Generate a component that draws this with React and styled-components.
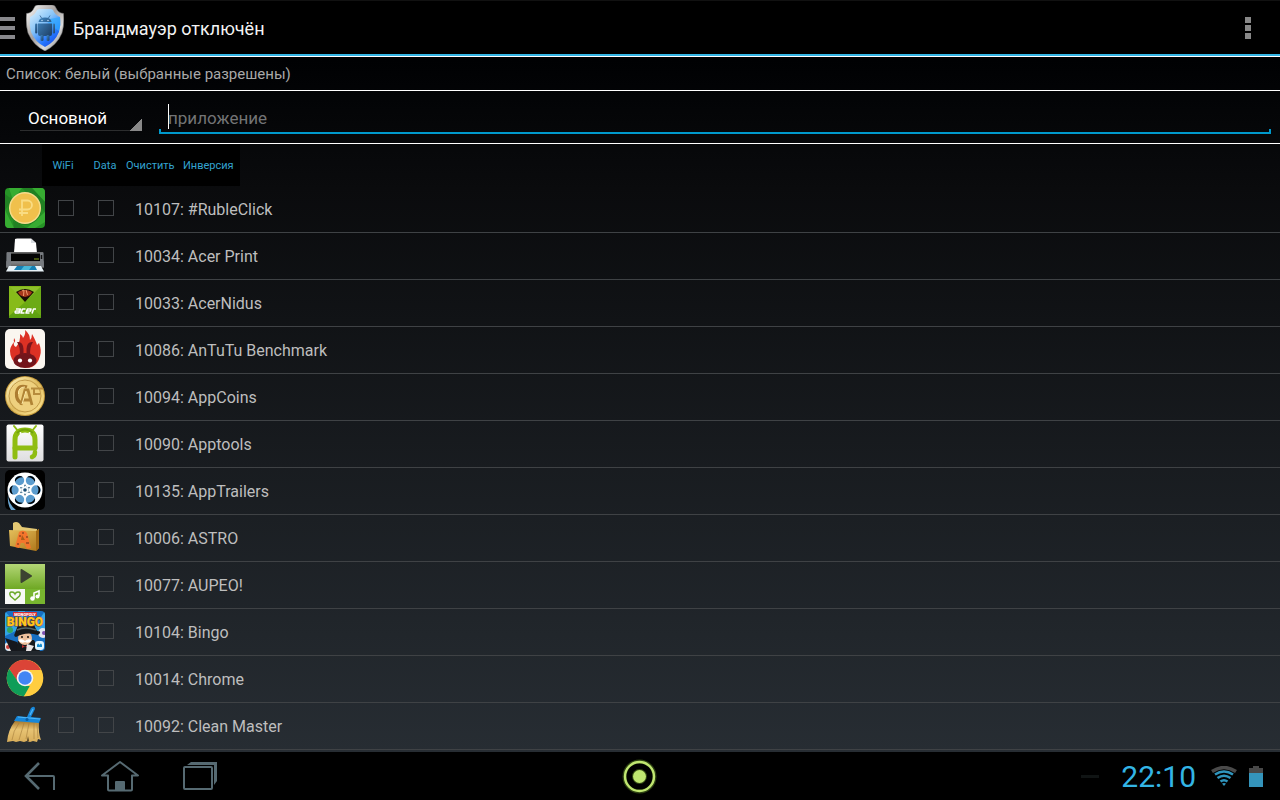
import React from "react";
import styled, { createGlobalStyle } from "styled-components";

const GlobalStyle = createGlobalStyle`
  *, *::before, *::after { box-sizing: border-box; }
  body { margin: 0; background: #000; }
  button, input, select { font: inherit; color: inherit; margin: 0; border: 0; padding: 0; background: none; border-radius: 0; }
  svg { display: block; }
`;

const Screen = styled.div`
  min-height: 100vh;
  display: flex;
  flex-direction: column;
  font-family: Roboto, "Noto Sans", sans-serif;
  font-size: 16px;
  color: #bebebe;
`;

const Content = styled.div`
  flex: 1;
  padding-bottom: 2px;
  background: linear-gradient(#000 0%, #000103 8%, #0a0b0d 25%, #272d33 100%);
`;

const ActionBar = styled.header`
  display: flex;
  align-items: center;
  height: 56px;
  padding-top: 1px;
  padding-right: 17px;
  background: #000;
  border-top: 1px solid #111;
  border-bottom: 2px solid #33b5e5;
`;

const DrawerButton = styled.button`
  display: flex;
  flex-direction: column;
  gap: 5px;
  width: 26px;
`;

const DrawerBar = styled.span`
  width: 15px;
  height: 4px;
  background: #88888c;
`;

const Title = styled.h1`
  flex: 1;
  margin: 0 0 0 9px;
  padding-top: 1px;
  font-size: 18px;
  line-height: 24px;
  font-weight: 400;
  color: #f3f3f3;
`;

const OverflowButton = styled.button`
  display: flex;
  flex-direction: column;
  align-items: center;
  gap: 2px;
  width: 30px;
`;

const Dot = styled.span`
  width: 6px;
  height: 6px;
  background: #888;
`;

const Mode = styled.p`
  margin: 0;
  height: 35px;
  padding: 1px 6px 0;
  line-height: 33px;
  font-size: 15px;
  color: #a9a9a9;
  border-top: 1px solid #fff;
  border-bottom: 1px solid #fff;
`;

const FilterBar = styled.div`
  display: flex;
  gap: 17px;
  height: 53px;
  padding: 10px 9px 9px 20px;
  border-bottom: 1px solid #fff;
`;

const ProfileSelect = styled.select`
  appearance: none;
  width: 122px;
  height: 30px;
  padding: 3px 8px 0;
  font-size: 17px;
  color: #fff;
  outline: none;
  background:
    linear-gradient(to bottom right, transparent 50%, #888 50%) right bottom / 12px 12px no-repeat,
    linear-gradient(#2c2d2e, #2c2d2e) left bottom / 100% 1px no-repeat;
`;

const SearchInput = styled.input`
  flex: 1;
  min-width: 0;
  height: 33px;
  padding: 0 9px;
  font-size: 17px;
  color: #fff;
  outline: none;
  background:
    linear-gradient(#fff, #fff) 9px 3px / 1px 25px no-repeat,
    linear-gradient(#0099cc, #0099cc) left bottom / 100% 2px no-repeat,
    linear-gradient(#0099cc, #0099cc) left bottom / 2px 5px no-repeat,
    linear-gradient(#0099cc, #0099cc) right bottom / 2px 5px no-repeat;
  &::placeholder { color: #737475; opacity: 1; }
`;

const BulkActions = styled.div`
  display: grid;
  grid-template-columns: 42px 42px 57px 57px;
  width: 198px;
  height: 42px;
  margin-left: 42px;
  background: #000;
`;

const BulkButton = styled.button`
  padding-top: 2px;
  font-size: 11px;
  line-height: 16px;
  color: #33a3d0;
  white-space: nowrap;
  text-align: ${(p) => (p.$start ? "left" : "center")};
`;

const AppList = styled.ul`
  list-style: none;
  margin: 0;
  padding: 0;
`;

const AppRow = styled.li`
  display: flex;
  align-items: center;
  height: 47px;
  padding: 0 5px;
  border-bottom: 1px solid #3f4245;
`;

const AppIcon = styled.svg`
  flex: none;
  width: 40px;
  height: 40px;
  margin-right: 13px;
  margin-bottom: 2px;
`;

const Check = styled.input`
  appearance: none;
  flex: none;
  width: 16px;
  height: 16px;
  margin: 0 24px 2px 0;
  && { border: 1px solid #424548; }
  &:checked { background: #33b5e5; }
`;

const AppName = styled.span`
  margin-left: -3px;
  padding-top: 2px;
  line-height: 20px;
`;

const NavBar = styled.nav`
  display: grid;
  grid-template-columns: 1fr auto 1fr;
  align-items: center;
  height: 48px;
  background: #000;
`;

const NavKeys = styled.div`
  display: flex;
`;

const NavButton = styled.button`
  display: grid;
  place-items: center;
  width: 80px;
  height: 46px;
`;

const Status = styled.div`
  display: flex;
  align-items: center;
  justify-content: flex-end;
  padding-right: 17px;
`;

const Dash = styled.span`
  width: 18px;
  height: 3px;
  margin-right: 22px;
  background: #101414;
`;

const Clock = styled.time`
  padding-top: 2px;
  font-size: 30px;
  line-height: 36px;
  color: #33b5e5;
  margin-right: 15px;
`;

const StatusIcons = styled.div`
  display: flex;
  align-items: center;
  gap: 12px;
`;

const Shield = () => (
  <svg width="38" height="46" viewBox="0 0 38 46" aria-hidden="true">
    <defs>
      <linearGradient id="steel" x1="0" y1="0" x2="1" y2="1">
        <stop offset="0" stopColor="#fff" /><stop offset=".45" stopColor="#a5a09e" />
        <stop offset=".7" stopColor="#dcdcdc" /><stop offset="1" stopColor="#666" />
      </linearGradient>
      <linearGradient id="glass" x1="0" y1="0" x2=".7" y2="1">
        <stop offset="0" stopColor="#e0f4ff" /><stop offset=".45" stopColor="#87c4f8" />
        <stop offset=".8" stopColor="#2476ff" /><stop offset="1" stopColor="#1f50e5" />
      </linearGradient>
      <linearGradient id="robot" x1="0" y1="0" x2="1" y2="1">
        <stop offset="0" stopColor="#4188c4" /><stop offset="1" stopColor="#1d3d62" />
      </linearGradient>
    </defs>
    <path d="M8 3Q9 0 12 0H26Q29 0 30 3Q32 8 37.500 8.500Q38.500 20 36 28Q31 40 19 46Q7 40 2 28Q-.5 20 .5 8.500Q6 8 8 3Z" fill="url(#steel)" stroke="#777" strokeWidth=".5" />
    <path d="M11 5Q12 4 14 4H24Q26 4 27 5Q29 10 34 12Q35 20 33 27Q29 37 19 42Q9 37 5 27Q3 20 4 12Q9 10 11 5Z" fill="url(#glass)" />
    <path d="M19 15 34 12Q35 20 33 26L27 22Z" fill="#2ea9ff" opacity=".7" />
    <g fill="url(#robot)">
      <path d="M12.500 17Q13 12.500 19 12.500Q25 12.500 25.500 17ZM12 18.500H26V29Q26 31 24 31H14Q12 31 12 29Z" />
      <rect x="9" y="18.500" width="2.300" height="10" rx="1.100" /><rect x="26.700" y="18.500" width="2.300" height="10" rx="1.100" />
      <rect x="14.500" y="30" width="3" height="6" rx="1.300" /><rect x="20.500" y="30" width="3" height="6" rx="1.300" />
    </g>
    <path d="M14 10.500 15.500 13M24 10.500 22.500 13" stroke="#2d5d8e" strokeWidth=".8" />
    <circle cx="16" cy="15.500" r=".7" fill="#cfe9ff" /><circle cx="22" cy="15.500" r=".7" fill="#cfe9ff" />
  </svg>
);

const RubleIcon = () => (
  <>
    <rect width="40" height="40" rx="4" fill="#269426" />
    <path d="M4 0H17L8 12ZM27 0H36Q40 0 40 5V14ZM0 22 9 40H4Q0 40 0 35ZM40 24V34L30 40H22Z" fill="#37ad32" />
    <path d="M0 6 8 12 0 22ZM17 0H27L40 14V24ZM9 40H22L8 33Z" fill="#218123" />
    <circle cx="20" cy="20.500" r="16.500" fill="#176f1b" opacity=".5" />
    <circle cx="20" cy="20" r="16" fill="#f6dc8d" /><circle cx="20" cy="20" r="14.500" fill="#f0c04c" />
    <path d="M17 28V12.500H22.500A4.500 4.500 0 0 1 22.500 21.500H14M14 25H23" fill="none" stroke="#f9dc83" strokeWidth="1.800" />
  </>
);

const PrinterIcon = () => (
  <>
    <defs>
      <linearGradient id="prn" x1="0" y1="0" x2="0" y2="1">
        <stop offset="0" stopColor="#777" /><stop offset=".2" stopColor="#111" /><stop offset=".55" stopColor="#000" />
        <stop offset=".6" stopColor="#85888b" /><stop offset="1" stopColor="#555" />
      </linearGradient>
    </defs>
    <path d="M9 18 10 4 12 3.500H26L31 8 32 18Z" fill="#fff" /><path d="M26 3.500V8H31Z" fill="#d8dce0" />
    <path d="M2 17H38L39 33H1Z" fill="url(#prn)" />
    <path d="M1.500 17.500H6V32H1.200ZM35 17.500H38.500L39 32H35Z" fill="#777b80" />
    <path d="M6 19H35V25H6Z" fill="#050505" /><path d="M29 24H34" stroke="#6f8718" strokeWidth="1.200" />
    <path d="M4 31H36L39 36.500H1Z" fill="#e8f2f7" /><path d="M12 31H30L32 35H9Z" fill="#1680b4" /><path d="M19 31H27L24 35H16Z" fill="#48b7d7" />
    <path d="M36.500 20V24" stroke="#111" strokeWidth="1.500" />
  </>
);

const AcerIcon = () => (
  <>
    <defs><linearGradient id="acer" x1="0" y1="0" x2="0" y2="1"><stop offset="0" stopColor="#83b615" /><stop offset="1" stopColor="#5ba010" /></linearGradient></defs>
    <rect x="4" y="4" width="32" height="32" fill="url(#acer)" />
    <path d="M4 4 20 20 4 34Z" fill="#87bb1a" /><path d="M36 4V34L20 20Z" fill="#6cab16" />
    <path d="M5 5H35L20 20Z" fill="#8ec02b" /><path d="M11 10Q20 4 29 10L20 20Z" fill="#1b0d05" />
    <path d="M13 10Q20 6 27 10Q26 14 20 15Q14 14 13 10Z" fill="#a8391c" /><path d="M17 9 19 8 18.500 14M21 8 22.500 13" stroke="#f09a6c" strokeWidth="1" fill="none" />
    <g fill="none" stroke="#fff" strokeWidth="1.600" strokeLinejoin="round">
      <path d="M11 27H15.500L14 31H10.500Q9.500 29.500 11 29H14.500M20.500 27H17.500L16 31H19.500M21 29H25.500L26 27H22.500L21 31H24.500M27 31.500 28.500 27H31" />
    </g>
  </>
);

const AntutuIcon = () => (
  <>
    <rect width="40" height="40" rx="5" fill="#faf6f0" />
    <path d="M13 36Q5 31 5 22Q5 18 9 13Q8 17 11 18Q16 12 15 5Q18 7 18 9Q21 5 20 1Q25 5 25 11Q27 9 27 5Q31 12 32 16L34 14Q37 22 35 27Q33 35 27 38Q20 40 13 36Z" fill="#dc3124" />
    <path d="M9 9Q11 11 10 14Q8 12 9 9Z" fill="#dc3124" />
    <ellipse cx="20" cy="31.500" rx="11.500" ry="7.500" fill="#73151b" />
    <path d="M12 13Q18 12 18.500 20V26H14.500Q16 19 12 13ZM28 13Q22 12 21.500 20V26H25.500Q24 19 28 13Z" fill="#7a151b" />
    <circle cx="15" cy="31.500" r="2.100" fill="#fff" /><circle cx="25" cy="31.500" r="2.100" fill="#fff" />
  </>
);

const CoinsIcon = () => (
  <>
    <defs><linearGradient id="gold" x1="0" y1="0" x2="1" y2="1"><stop offset="0" stopColor="#fff3bd" /><stop offset=".5" stopColor="#dfbc60" /><stop offset="1" stopColor="#ffe795" /></linearGradient></defs>
    <circle cx="20" cy="20" r="20" fill="#c49a3c" /><circle cx="20" cy="20" r="19" fill="url(#gold)" />
    <circle cx="20" cy="20" r="16" fill="none" stroke="#c29a48" strokeWidth="1" /><circle cx="20" cy="20" r="15" fill="#eed07e" />
    <path d="M22 11Q13 8 11.500 17Q11 24 16 27" fill="none" stroke="#ad7d31" strokeWidth="3.200" />
    <path d="M16 29 20 14H23L27 29M18.500 24H25" fill="none" stroke="#b18435" strokeWidth="2.800" />
    <path d="M26 12.500H38M29 13V18H35" fill="none" stroke="#b78c3d" strokeWidth="2" />
    <path d="M20 11Q13 11 13.500 18M17 28 21 15" fill="none" stroke="#ffedaa" strokeWidth="1" />
  </>
);

const ApptoolsIcon = () => (
  <>
    <defs><linearGradient id="tile" x1="0" y1="0" x2="0" y2="1"><stop offset="0" stopColor="#fff" /><stop offset="1" stopColor="#dedee0" /></linearGradient></defs>
    <rect x="1.500" y="1.500" width="37" height="37" rx="2" fill="url(#tile)" />
    <g fill="none" stroke="#8fbd12" strokeLinecap="round">
      <path d="M9 3 13 8M31 3 27 8" strokeWidth="2" />
      <path d="M10 34V17Q10 7 20 7Q30 7 30 17V24" strokeWidth="5" /><path d="M10 25H30" strokeWidth="5" /><path d="M30 29Q30 33 27 34" strokeWidth="4.500" />
    </g>
    <path d="M12 10Q20 3 28 10" stroke="#73a40d" strokeWidth="2" fill="none" />
    <circle cx="15.500" cy="10" r="1" fill="#fff" /><circle cx="24.500" cy="10" r="1" fill="#fff" />
  </>
);

const TrailersIcon = () => (
  <>
    <rect width="40" height="40" rx="5" fill="#000" />
    <path d="M3 24Q3 34 11 40H6Q2 34 3 24Z" fill="#6aa4cf" />
    <circle cx="20" cy="20" r="17.500" fill="#fff" />
    {[0, 60, 120, 180, 240, 300].map((a) => (
      <g key={a} transform={`rotate(${a} 20 20)`}>
        <circle cx="31" cy="20" r="4.700" fill="#5b9cce" /><path d="M32 15.500A4.700 4.700 0 0 1 32 24.500Q35 20 32 15.500Z" fill="#000" />
        <circle cx="24" cy="22.300" r=".8" fill="#245778" />
      </g>
    ))}
    <circle cx="20" cy="20" r="1.800" fill="#184c72" />
    <circle cx="20" cy="20" r="3.500" fill="none" stroke="#7ba8c4" strokeDasharray="1 1.500" strokeWidth=".8" />
  </>
);

const AstroIcon = () => (
  <>
    <defs><linearGradient id="folder" x1="0" y1="0" x2="1" y2="1"><stop offset="0" stopColor="#e6c05c" /><stop offset="1" stopColor="#ad761a" /></linearGradient></defs>
    <path d="M8 6Q11 4 14 6L17 10 32 12V31L8 29Z" fill="#e3c873" />
    <path d="M4 13 31 14 34 12V31L31 34 5 29Z" fill="url(#folder)" /><path d="M31 14 34 12V31L31 34Z" fill="#a06914" />
    <path d="M14 15Q19 12 22 16L26 31 22 32 19 26H16L14 31 10 30Z" fill="#f4752c" /><path d="M17 18 20 23H16Z" fill="#ab5e17" />
    <path d="M14 19H16M21 20H23M12 27H14M21 26H24M18 15V17" stroke="#62331b" strokeWidth="1" />
  </>
);

const AupeoIcon = () => (
  <>
    <defs><linearGradient id="aup" x1="0" y1="0" x2="0" y2="1"><stop offset="0" stopColor="#b3d676" /><stop offset="1" stopColor="#6fa824" /></linearGradient></defs>
    <rect width="40" height="25" fill="url(#aup)" /><path d="M0 25H20V40H0Z" fill="#f8f8f6" /><path d="M20 25H40V40H20Z" fill="#78b52f" />
    <path d="M16.500 6 26 12 16.500 18Z" fill="#3c4432" stroke="#3c4432" strokeWidth="2" strokeLinejoin="round" />
    <path d="M10 36 5.500 32Q3.500 28 7 28Q9 28 10 30Q11 28 13 28Q16.500 28 14.500 32Z" fill="none" stroke="#6aa829" strokeWidth="1.500" />
    <path d="M29 34V29L34 27V32" fill="none" stroke="#fff" strokeWidth="1.600" /><circle cx="27.500" cy="34.500" r="2.300" fill="#fff" /><circle cx="32.500" cy="32.500" r="2" fill="#fff" />
  </>
);

const BingoLetters = styled.text`
  font-family: Roboto, sans-serif;
  font-size: ${(p) => p.$size}px;
  font-weight: 900;
  fill: ${(p) => p.$fill};
  stroke: ${(p) => p.$edge || "none"};
  stroke-width: 1px;
  paint-order: stroke;
  text-anchor: middle;
`;

const BingoIcon = () => (
  <>
    <defs><clipPath id="bingoClip"><rect width="40" height="40" rx="4" /></clipPath></defs>
    <g clipPath="url(#bingoClip)">
      <rect width="40" height="40" fill="#176fc2" /><path d="M0 0 15 18 0 25ZM40 0 28 18 40 24ZM13 0H20L18 16Z" fill="#32a5e5" />
      <circle cx="38" cy="22" r="5" fill="#e5e6ef" /><circle cx="39" cy="22" r="2" fill="#7b4fb0" />
      <circle cx="5" cy="19" r="3" fill="#31a560" /><circle cx="4" cy="36" r="5" fill="#e5e5e5" /><circle cx="3" cy="36" r="2" fill="#cf403a" />
      <path d="M0 27 12 31 16 40H6Z" fill="#15171d" /><path d="M13 29H29L35 40H11Z" fill="#16191d" />
      <ellipse cx="20" cy="27" rx="7" ry="7" fill="#eebf9b" />
      <path d="M10 22 13 14H29L32 20Q38 20 33 24Q21 20 11 26Q8 25 10 22Z" fill="#17191b" /><path d="M12 19Q20 15 31 19" stroke="#566567" strokeWidth="1.500" fill="none" />
      <path d="M13 29Q17 27 20 30Q23 27 27 29Q24 33 20 31Q16 33 13 29Z" fill="#fff" /><circle cx="17" cy="26" r=".9" /><circle cx="23" cy="26" r=".9" />
      <path d="M17 34 20 35.500 24 34V37L20 35.500 17 37Z" fill="#c02c2d" /><path d="M22 33 29 35 26 40H21Z" fill="#e9e4e4" />
      <rect x="30" y="30" width="9" height="9" rx="3" fill="#e2f5ff" /><path d="M32 36V34Q33 31 34.500 34Q36 31 37 34V36Z" fill="#168dd0" />
      <rect x="8" y="1" width="24" height="4" fill="#d52c32" />
      <BingoLetters $size={4} $fill="#fff" x="20" y="4.500">MONOPOLY</BingoLetters>
      <BingoLetters $size={12} $fill="#ffc51c" $edge="#87431c" x="20" y="15">BINGO</BingoLetters>
    </g>
  </>
);

const ChromeIcon = () => (
  <>
    <circle cx="20" cy="20" r="18.300" fill="#ffcd40" />
    <path d="M20 1.700A18.300 18.300 0 0 1 35.850 12H20L13 24.500 4.150 10.850A18.300 18.300 0 0 1 20 1.700Z" fill="#db4437" />
    <path d="M4.150 10.850 13.100 24 20 28H27L19 38.300A18.300 18.300 0 0 1 4.150 10.850Z" fill="#0f9d58" />
    <path d="M27 24 19 38.300A18.300 18.300 0 0 0 35.850 12H20Z" fill="#ffcd40" />
    <circle cx="20" cy="20" r="8.300" fill="#f4f4f4" /><circle cx="20" cy="20" r="6.700" fill="#4285f4" />
  </>
);

const BroomIcon = () => (
  <>
    <defs><linearGradient id="straw" x1="0" y1="0" x2="0" y2="1"><stop offset="0" stopColor="#a8782c" /><stop offset=".4" stopColor="#e8c474" /><stop offset="1" stopColor="#d8ae5b" /></linearGradient></defs>
    <path d="M10 16H34Q33 28 36 35L33 34 32 37 28 36 25 37 22 36 19 37 15 36 11 37 8 36 2 37Q3 25 10 16Z" fill="url(#straw)" />
    <path d="M14 18Q8 26 7 35M19 18 14 35M24 18 21 34M29 18V34M32 19 33 33" stroke="#a57c3a" strokeWidth=".6" fill="none" />
    <path d="M22 36 23 31 24 36Z" fill="#5b441f" />
    <path d="M12 11 22 12 26 3Q30 0 30 4L26 12 36 13 34 18 9 16Z" fill="#1687da" /><path d="M13 12 35 14M25 10 28 4" stroke="#50b6f5" strokeWidth="1.200" fill="none" /><circle cx="22" cy="14.500" r="1.500" fill="#0b5b9f" />
  </>
);

const apps = [
  { uid: 10107, name: "#RubleClick", Icon: RubleIcon },
  { uid: 10034, name: "Acer Print", Icon: PrinterIcon },
  { uid: 10033, name: "AcerNidus", Icon: AcerIcon },
  { uid: 10086, name: "AnTuTu Benchmark", Icon: AntutuIcon },
  { uid: 10094, name: "AppCoins", Icon: CoinsIcon },
  { uid: 10090, name: "Apptools", Icon: ApptoolsIcon },
  { uid: 10135, name: "AppTrailers", Icon: TrailersIcon },
  { uid: 10006, name: "ASTRO", Icon: AstroIcon },
  { uid: 10077, name: "AUPEO!", Icon: AupeoIcon },
  { uid: 10104, name: "Bingo", Icon: BingoIcon },
  { uid: 10014, name: "Chrome", Icon: ChromeIcon },
  { uid: 10092, name: "Clean Master", Icon: BroomIcon },
];

const BackKey = () => (
  <svg width="32" height="30" viewBox="0 0 32 30" fill="none" stroke="#566a72" strokeWidth="2">
    <path d="M15 2 2 15 15 28" strokeWidth="2.600" /><path d="M2 15H29Q30 15 30 16V29" />
  </svg>
);

const HomeKey = () => (
  <svg width="40" height="32" viewBox="0 0 40 32" fill="none" stroke="#566a72" strokeWidth="2">
    <path d="M2 15.500 20 2 38 15.500H32V29.500Q32 30.500 31 30.500H9Q8 30.500 8 29.500V15.500Z" strokeLinejoin="round" />
    <path d="M15 31V22Q15 21 16 21H24Q25 21 25 22V31Z" fill="#566a72" stroke="none" />
  </svg>
);

const RecentKey = () => (
  <svg width="34" height="28" viewBox="0 0 34 28">
    <rect x="1" y="5" width="28" height="22" rx="1" fill="none" stroke="#566a72" strokeWidth="2" />
    <path d="M4 3 8 0H34V19L31 23V3Z" fill="#566a72" />
  </svg>
);

const RingKey = () => (
  <svg width="40" height="40" viewBox="0 0 40 40">
    <circle cx="19.500" cy="20.500" r="15" fill="none" stroke="#71a52d" strokeWidth="4" opacity=".4" />
    <circle cx="19.500" cy="20.500" r="14.500" fill="none" stroke="#c0e671" strokeWidth="2.400" />
    <circle cx="19.500" cy="20.500" r="7.500" fill="#71a52d" opacity=".45" /><circle cx="19.500" cy="20.500" r="6.500" fill="#c0e671" />
  </svg>
);

const Wifi = () => (
  <svg width="26" height="20" viewBox="0 0 26 20" fill="none" strokeWidth="2.600">
    <path d="M1 5.500Q13-2.500 25 5.500" stroke="#4a4a4a" strokeWidth="3.400" />
    <g stroke="#2f95bd"><path d="M4 8.500Q13 2.500 22 8.500M6.500 12Q13 7.500 19.500 12M9.500 15.500Q13 13 16.500 15.500" /></g>
    <path d="M11 17.500Q13 16.500 15 17.500L13 20Z" fill="#2f95bd" />
  </svg>
);

const Battery = () => (
  <svg width="14" height="21" viewBox="0 0 14 21">
    <path d="M4 0H10V2H14V8H0V2H4Z" fill="#484848" /><path d="M0 7H14V21H0Z" fill="#3494bb" />
  </svg>
);

export default function App() {
  return (
    <Screen>
      <GlobalStyle />
      <Content>
        <ActionBar>
          <DrawerButton aria-label="Меню"><DrawerBar /><DrawerBar /><DrawerBar /></DrawerButton>
          <Shield />
          <Title>Брандмауэр отключён</Title>
          <OverflowButton aria-label="Ещё"><Dot /><Dot /><Dot /></OverflowButton>
        </ActionBar>
        <main>
          <Mode>Список: белый (выбранные разрешены)</Mode>
          <FilterBar>
            <ProfileSelect aria-label="Профиль"><option>Основной</option></ProfileSelect>
            <SearchInput type="text" placeholder="приложение" aria-label="приложение" />
          </FilterBar>
          <BulkActions>
            <BulkButton>WiFi</BulkButton>
            <BulkButton>Data</BulkButton>
            <BulkButton $start>Очистить</BulkButton>
            <BulkButton $start>Инверсия</BulkButton>
          </BulkActions>
          <AppList>
            {apps.map(({ uid, name, Icon }) => (
              <AppRow key={uid}>
                <AppIcon viewBox="0 0 40 40" aria-hidden="true"><Icon /></AppIcon>
                <Check type="checkbox" aria-label={`WiFi: ${name}`} />
                <Check type="checkbox" aria-label={`Data: ${name}`} />
                <AppName>{uid}: {name}</AppName>
              </AppRow>
            ))}
          </AppList>
        </main>
      </Content>
      <NavBar>
        <NavKeys>
          <NavButton aria-label="Назад"><BackKey /></NavButton>
          <NavButton aria-label="Домой"><HomeKey /></NavButton>
          <NavButton aria-label="Недавние"><RecentKey /></NavButton>
        </NavKeys>
        <NavButton aria-label="Кольцо"><RingKey /></NavButton>
        <Status>
          <Dash />
          <Clock>22:10</Clock>
          <StatusIcons><Wifi /><Battery /></StatusIcons>
        </Status>
      </NavBar>
    </Screen>
  );
}
